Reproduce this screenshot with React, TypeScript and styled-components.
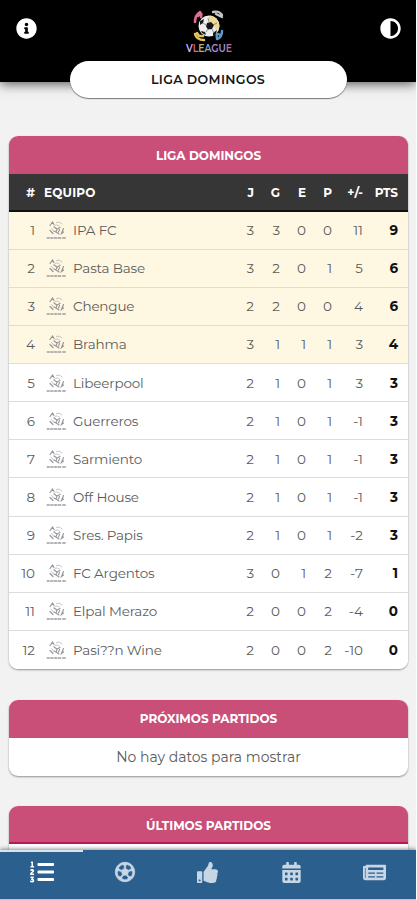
import React from "react";
import styled, { createGlobalStyle } from "styled-components";
import {
  FaAdjust,
  FaCalendarAlt,
  FaInfoCircle,
  FaListOl,
  FaNewspaper,
  FaRegFutbol,
  FaThumbsUp,
} from "react-icons/fa";

const GlobalStyle = createGlobalStyle`
  * { box-sizing: border-box; }
  html, body { margin: 0; height: 900px; overflow: hidden; background: #f2f2f2; }
  body { font-family: Montserrat, Inter, "Open Sans", sans-serif; color: #5c5c5c; }
`;

const Screen = styled.div`
  display: flex;
  flex-direction: column;
  width: 417px;
  height: 900px;
  overflow: hidden;
  background: #f2f2f2;
  border-right: 1px solid #fbfbfb;
`;

const Header = styled.header`
  flex: none;
  height: 82px;
  background: #000;
  display: flex;
  justify-content: space-between;
  padding: 18px 15px 0 16px;
  color: #fff;
  box-shadow: 0 2px 11px rgba(0, 0, 0, 0.65);
  & > svg { flex: none; }
`;

const Brand = styled.div`
  margin-top: -9px;
  width: 48px;
  height: 45px;
`;

const LeaguePill = styled.div`
  flex: none;
  position: relative;
  align-self: center;
  width: 277px;
  height: 37px;
  margin-top: -21px;
  border-radius: 19px;
  background: #fff;
  color: #151515;
  box-shadow: 0 1px 1px rgba(0, 0, 0, 0.5);
  display: flex;
  align-items: center;
  justify-content: center;
  font-size: 12.6px;
  font-weight: 600;
  letter-spacing: 0.35px;
`;

const Content = styled.main`
  flex: 1;
  min-height: 0;
  overflow: hidden;
  padding: 38px 8px 0 9px;
  display: flex;
  flex-direction: column;
  gap: 30.5px;
`;

const Card = styled.section`
  flex: none;
  border-radius: 9px;
  background: #fff;
  overflow: hidden;
  box-shadow: 0 1px 2px rgba(0, 0, 0, 0.4);
`;

const CardTitle = styled.h2<{ $edge?: boolean }>`
  margin: 0;
  height: 38px;
  background: #c94f78;
  border-bottom: ${(p) => (p.$edge ? "2px solid #bb155b" : "0")};
  padding-top: ${(p) => (p.$edge ? "2px" : "0")};
  color: #fff;
  display: flex;
  align-items: center;
  justify-content: center;
  font-size: 12px;
  font-weight: 700;
`;

const Empty = styled.p`
  margin: 0;
  height: 38px;
  display: flex;
  align-items: center;
  justify-content: center;
  font-size: 14px;
`;

const BlankBody = styled.div`
  height: 38px;
`;

const Line = styled.div`
  display: grid;
  grid-template-columns: 26px 11px 21px 6px 156px 25px 26px 26px 26px 31px 35px;
  align-items: center;
`;

const HeadLine = styled(Line)`
  height: 37.5px;
  padding-top: 2px;
  background: #363636;
  border-bottom: 2px solid #111;
  color: #fff;
  font-size: 12px;
  font-weight: 700;
`;

const TeamLine = styled(Line)<{ $top: boolean }>`
  height: 38.15px;
  background: ${(p) => (p.$top ? "#fef8e3" : "#fff")};
  border-bottom: 1px solid #dcdcdc;
  font-size: 13.5px;
  &:last-child { border-bottom: 0; }
`;

const Num = styled.span<{ $strong?: boolean }>`
  justify-self: end;
  white-space: nowrap;
  font-weight: ${(p) => (p.$strong ? 700 : "inherit")};
  color: ${(p) => (p.$strong ? "#111" : "inherit")};
`;

const HeadTeam = styled.span`
  grid-column: 3 / 6;
  margin-left: -2px;
  letter-spacing: 0.2px;
`;

const CrestCell = styled.span`
  grid-column: 3;
  display: flex;
  opacity: 0.65;
`;

const TeamName = styled.span`
  grid-column: 5;
  white-space: nowrap;
  letter-spacing: -0.16px;
`;

const NavBar = styled.nav`
  flex: none;
  position: relative;
  height: 50px;
  background: #2b5f8d;
  border-bottom: 1px solid #a9c9df;
  box-shadow: 0 -1px 4px rgba(0, 0, 0, 0.45);
  display: grid;
  grid-template-columns: repeat(5, 1fr);
`;

const Tab = styled.button<{ $active?: boolean }>`
  border: 0;
  border-top: 2px solid ${(p) => (p.$active ? "#d9e4ed" : "transparent")};
  background: none;
  padding: 0 0 7px;
  color: ${(p) => (p.$active ? "#fff" : "#c6d6e4")};
  display: flex;
  align-items: center;
  justify-content: center;
`;

const BallIcon = styled(FaRegFutbol)`
  overflow: visible;
  stroke: currentColor;
  stroke-width: 20px;
`;

const LeagueLogo = () => (
  <svg width="48" height="45" viewBox="0 0 48 45" fill="none">
    <circle cx="24" cy="17" r="10.5" fill="#eee" />
    <path d="M25 6.500a10.500 10.500 0 0 1 9 13l-3 2-2-5-3-3-3-4z" fill="#eed895" />
    <path d="m22 14 4-1 3 3-2 4-4 .5-2-3zM15 12l4-2-1 4-3 2zM16 22l4 1 1 3-4-2zM28 24l4-3-1 4-3 2z" fill="#171717" />
    <path d="m24 13-1-4M28 16l4-2M27 20l2 4M23 20l-2 3M21 16l-3-2" stroke="#666" strokeWidth=".7" />
    <path d="M10 13c0-5 2-8 5-10M13 7c3-4 4-3 3 1" stroke="#df6d94" strokeWidth="2.600" strokeLinecap="round" />
    <path d="M28 3c5-1 7 0 9 3M31 5l6 3" stroke="#c6c9c9" strokeWidth="2.300" strokeLinecap="round" />
    <path d="M10 25c1 4 4 6 9 6M12 24l2 3h4" stroke="#e2c35a" strokeWidth="2.500" strokeLinecap="round" />
    <path d="M32 30c4-1 5-4 5-8M32 29c-1-4 0-5 3-3" stroke="#5b9bc9" strokeWidth="2.500" strokeLinecap="round" />
    <text x="1" y="43" fontFamily="Montserrat, Inter, sans-serif" fontSize="10" fontWeight="600" textLength="46" lengthAdjust="spacingAndGlyphs">
      <tspan fill="#c8b8fa">V</tspan><tspan fill="#d66794">L</tspan><tspan fill="#b2b86a">E</tspan><tspan fill="#79a9d2">A</tspan><tspan fill="#b586ce">G</tspan><tspan fill="#9b9dec">U</tspan><tspan fill="#ca6a99">E</tspan>
    </text>
  </svg>
);

const Crest = () => (
  <svg width="21" height="20" viewBox="0 0 21 20" fill="none" stroke="#625f6b" strokeLinecap="round">
    <path d="M4 5.500 6.500 2 8 4.500M17.500 8.500l-2 5 2-1.500M4 10.500l3 3" strokeWidth="1.200" />
    <path d="M10.500 2.500c2-1 4 0 5.500 1.500M8 6.500c1.500-2 4-2 6 0M5.500 8.500l2 2.500" stroke="#a5a2aa" strokeWidth="1" />
    <path d="m8 7 3 2 3-1.500M11 9l-1 3 3 2M8 11l2 1M13.500 9.500l-1 2.500" strokeWidth="1.100" />
    <path d="M1.500 18h1.500M5 18h1.500M8.500 18h2M12.500 18h2M17 18h2" stroke="#928a93" strokeWidth="1.900" />
  </svg>
);

interface Team {
  name: string;
  stats: number[];
  points: number;
}

const teams: Team[] = [
  { name: "IPA FC", stats: [3, 3, 0, 0, 11], points: 9 },
  { name: "Pasta Base", stats: [3, 2, 0, 1, 5], points: 6 },
  { name: "Chengue", stats: [2, 2, 0, 0, 4], points: 6 },
  { name: "Brahma", stats: [3, 1, 1, 1, 3], points: 4 },
  { name: "Libeerpool", stats: [2, 1, 0, 1, 3], points: 3 },
  { name: "Guerreros", stats: [2, 1, 0, 1, -1], points: 3 },
  { name: "Sarmiento", stats: [2, 1, 0, 1, -1], points: 3 },
  { name: "Off House", stats: [2, 1, 0, 1, -1], points: 3 },
  { name: "Sres. Papis", stats: [2, 1, 0, 1, -2], points: 3 },
  { name: "FC Argentos", stats: [3, 0, 1, 2, -7], points: 1 },
  { name: "Elpal Merazo", stats: [2, 0, 0, 2, -4], points: 0 },
  { name: "Pasi??n Wine", stats: [2, 0, 0, 2, -10], points: 0 },
];

const columns = ["J", "G", "E", "P", "+/-", "PTS"];

const Standings = () => (
  <Card>
    <CardTitle>LIGA DOMINGOS</CardTitle>
    <HeadLine>
      <Num>#</Num>
      <HeadTeam>EQUIPO</HeadTeam>
      {columns.map((label) => (
        <Num key={label}>{label}</Num>
      ))}
    </HeadLine>
    {teams.map((team, i) => (
      <TeamLine key={team.name} $top={i < 4}>
        <Num>{i + 1}</Num>
        <CrestCell>
          <Crest />
        </CrestCell>
        <TeamName>{team.name}</TeamName>
        {team.stats.map((value, j) => (
          <Num key={columns[j]}>{value}</Num>
        ))}
        <Num $strong>{team.points}</Num>
      </TeamLine>
    ))}
  </Card>
);

export default function App() {
  return (
    <Screen>
      <GlobalStyle />
      <Header>
        <FaInfoCircle size={21} />
        <Brand>
          <LeagueLogo />
        </Brand>
        <FaAdjust size={21} />
      </Header>
      <LeaguePill>LIGA DOMINGOS</LeaguePill>
      <Content>
        <Standings />
        <Card>
          <CardTitle>PRÓXIMOS PARTIDOS</CardTitle>
          <Empty>No hay datos para mostrar</Empty>
        </Card>
        <Card>
          <CardTitle $edge>ÚLTIMOS PARTIDOS</CardTitle>
          <BlankBody />
        </Card>
      </Content>
      <NavBar>
        <Tab $active aria-label="Posiciones"><FaListOl size={24} /></Tab>
        <Tab aria-label="Partidos"><BallIcon size={20} /></Tab>
        <Tab aria-label="Votar"><FaThumbsUp size={21} /></Tab>
        <Tab aria-label="Calendario"><FaCalendarAlt size={21} /></Tab>
        <Tab aria-label="Noticias"><FaNewspaper size={23} /></Tab>
      </NavBar>
    </Screen>
  );
}
